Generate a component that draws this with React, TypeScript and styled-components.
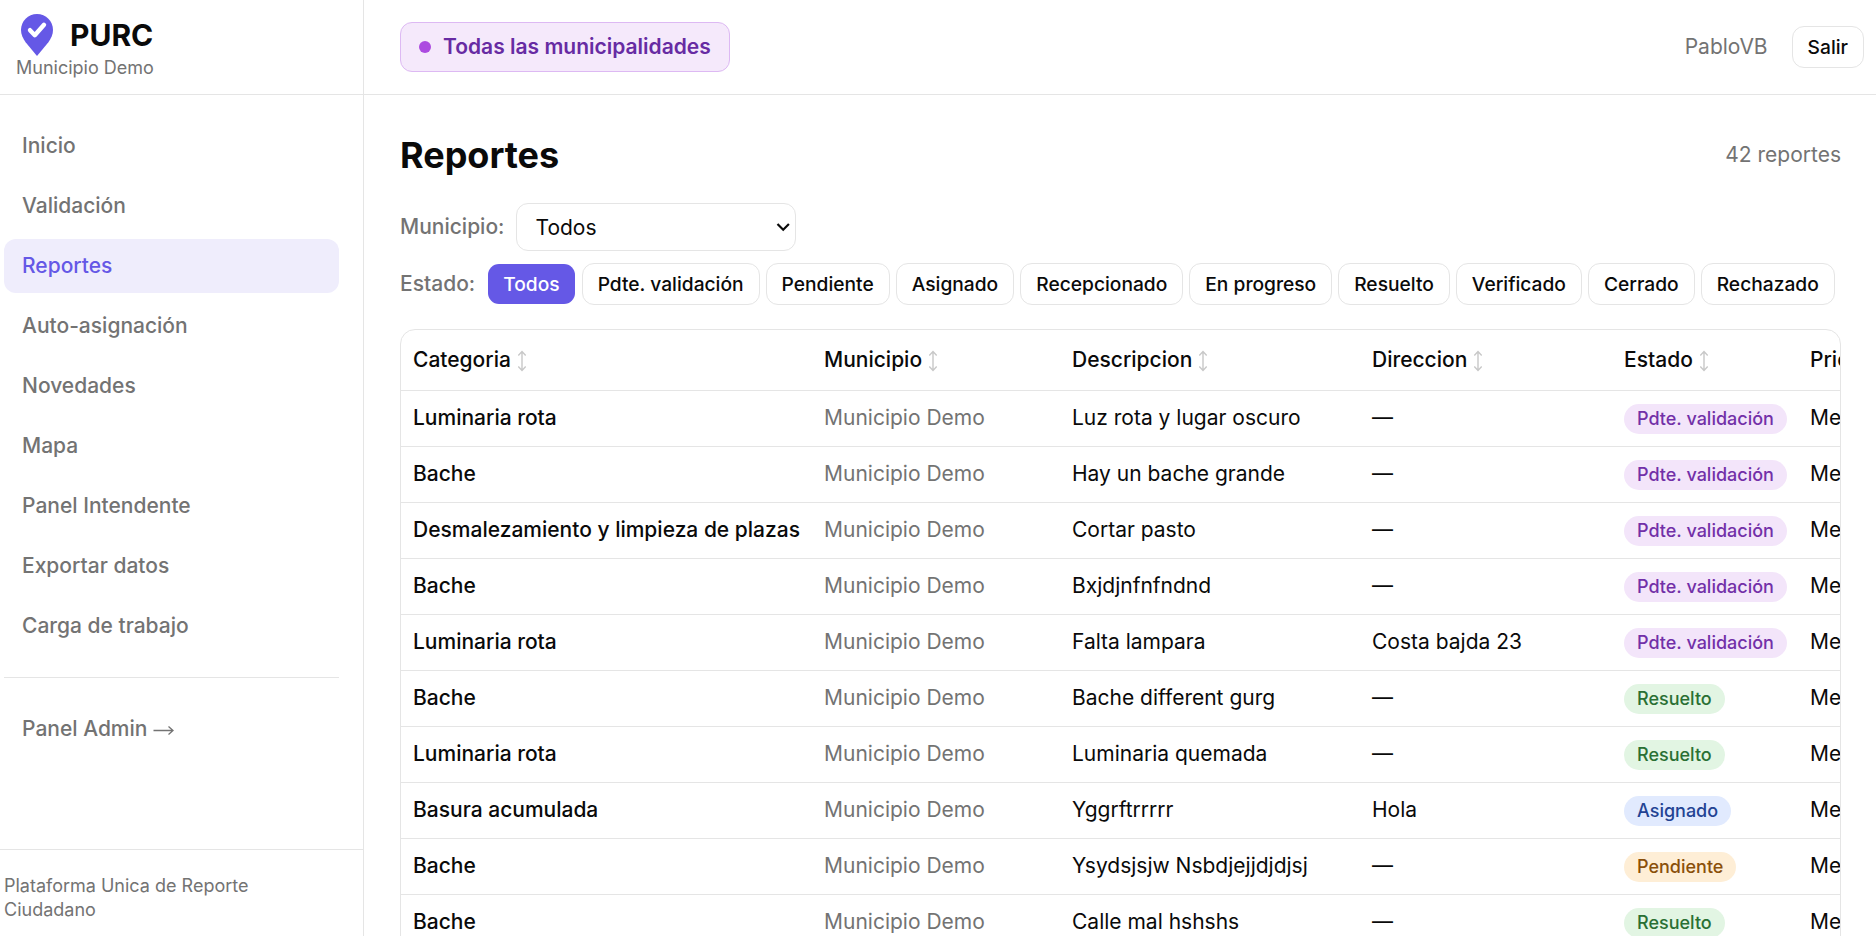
import React from 'react';
import styled, { createGlobalStyle, css } from 'styled-components';

const GlobalStyle = createGlobalStyle`
  *, *::before, *::after { box-sizing: border-box; }
  html, body { margin: 0; padding: 0; background: #fff; overflow: hidden; }
  body {
    font-family: Inter, "Liberation Sans", sans-serif;
    font-size: 21px;
    line-height: 30px;
    color: #0a0a0a;
  }
`;

const line = '#e5e5e5';
const muted = '#737373';
const primary = '#6558e6';

const Shell = styled.div`
  display: flex;
  height: 100vh;
  overflow: hidden;
`;

const Sidebar = styled.aside`
  display: flex;
  flex-direction: column;
  flex: none;
  width: 364px;
  border-right: 1px solid ${line};
`;

const Brand = styled.div`
  height: 95px;
  flex: none;
  padding: 13px 16px 0;
  border-bottom: 1px solid ${line};
`;

const BrandRow = styled.div`
  display: flex;
  align-items: center;
  height: 43px;
  gap: 16px;
  padding-left: 4px;
`;

const BrandName = styled.span`
  font-size: 30px;
  font-weight: 700;
`;

const BrandSub = styled.div`
  font-size: 18px;
  line-height: 24px;
  color: ${muted};
`;

const Nav = styled.nav`
  display: flex;
  flex-direction: column;
  flex: 1;
  gap: 6px;
  padding: 24px 24px 0 4px;
`;

const NavItem = styled.a<{ $active?: boolean }>`
  height: 54px;
  padding: 12px 18px;
  border-radius: 12px;
  font-weight: 500;
  color: ${p => (p.$active ? primary : muted)};
  background: ${p => (p.$active ? '#efedfc' : 'transparent')};
`;

const ArrowIcon = styled.svg`
  vertical-align: -1px;
`;

const Divider = styled.div`
  height: 1px;
  margin: 18px 0;
  background: ${line};
`;

const SideFooter = styled.footer`
  flex: none;
  height: 87px;
  padding: 24px 60px 0 4px;
  border-top: 1px solid ${line};
  font-size: 18px;
  line-height: 24px;
  color: ${muted};
`;

const Content = styled.div`
  display: flex;
  flex-direction: column;
  flex: 1;
  min-width: 0;
`;

const TopBar = styled.header`
  display: flex;
  align-items: center;
  justify-content: space-between;
  flex: none;
  height: 95px;
  padding: 0 12px 0 36px;
  border-bottom: 1px solid ${line};
`;

const Scope = styled.div`
  display: flex;
  align-items: center;
  gap: 12px;
  height: 50px;
  padding: 0 18px;
  border: 1px solid #ddb9f3;
  border-radius: 12px;
  background: #f5e9fb;
  color: #672ba3;
  font-weight: 600;
`;

const Dot = styled.span`
  width: 12px;
  height: 12px;
  border-radius: 50%;
  background: #ac4be0;
`;

const UserArea = styled.div`
  display: flex;
  align-items: center;
  gap: 24px;
  color: ${muted};
`;

const Button = styled.button<{ $active?: boolean }>`
  height: 42px;
  padding: 0 15px;
  border: 1px solid ${line};
  border-radius: 12px;
  background: #fff;
  background-clip: padding-box;
  color: #0a0a0a;
  font-family: inherit;
  font-size: 19.2px;
  font-weight: 500;
  line-height: 28px;
  white-space: nowrap;
  ${p => p.$active && css`
    border-color: transparent;
    background-color: ${primary};
    color: #fff;
  `}
`;

const Main = styled.main`
  display: flex;
  flex-direction: column;
  padding: 36px 35px 0 36px;
`;

const TitleRow = styled.div`
  display: flex;
  align-items: center;
  justify-content: space-between;
  height: 48px;
  color: ${muted};
`;

const Title = styled.h1`
  margin: 0;
  color: #0a0a0a;
  font-size: 36px;
  line-height: 48px;
  font-weight: 700;
`;

const MunicipalityRow = styled.div`
  display: flex;
  align-items: center;
  gap: 12px;
  margin-top: 24px;
  height: 48px;
`;

const StateRow = styled.div`
  display: flex;
  align-items: center;
  gap: 6.03px;
  margin-top: 12px;
  height: 42px;
`;

const Label = styled.span<{ $gap?: number }>`
  margin-right: ${p => p.$gap ?? 0}px;
  color: ${muted};
  font-weight: 500;
`;

const SelectBox = styled.div`
  position: relative;
  width: 280px;
  height: 48px;

  svg {
    position: absolute;
    right: 5px;
    top: 18px;
    pointer-events: none;
  }
`;

const Select = styled.select`
  appearance: none;
  width: 100%;
  height: 48px;
  padding: 0 30px 0 18px;
  border: 1px solid ${line};
  border-radius: 12px;
  background: #fff;
  color: #0a0a0a;
  font-family: inherit;
  font-size: 21px;
`;

const TableFrame = styled.div`
  margin-top: 24px;
  border: 1px solid ${line};
  border-radius: 15px;
  overflow: hidden;
`;

const Table = styled.table`
  width: 1660px;
  table-layout: fixed;
  border-collapse: separate;
  border-spacing: 0;
`;

const HeadCell = styled.th`
  height: 61px;
  padding: 0 12px;
  border-bottom: 1px solid ${line};
  text-align: left;
  font-weight: 500;
  white-space: nowrap;
`;

const SortIcon = styled.svg`
  margin-left: 6px;
  vertical-align: -5px;
`;

const Cell = styled.td<{ $muted?: boolean; $strong?: boolean }>`
  height: 56px;
  padding: 0 12px 2px;
  border-bottom: 1px solid ${line};
  color: ${p => (p.$muted ? muted : '#0a0a0a')};
  font-weight: ${p => (p.$strong ? 500 : 400)};
  white-space: nowrap;
`;

const tones = {
  'Pdte. validación': ['#f3e5fa', '#7230a8'],
  Resuelto: ['#e2f5e3', '#2a7034'],
  Asignado: ['#e1eafe', '#234393'],
  Pendiente: ['#feeed6', '#8a500a'],
} as const;

type State = keyof typeof tones;

const Badge = styled.span<{ $state: State }>`
  display: flex;
  align-items: center;
  width: fit-content;
  height: 30px;
  margin-top: 3px;
  padding: 0 13px;
  border-radius: 15px;
  background: ${p => tones[p.$state][0]};
  color: ${p => tones[p.$state][1]};
  font-size: 18px;
  font-weight: 500;
`;

const Pin = () => (
  <svg width="34" height="43" viewBox="0 0 34 43" fill="none">
    <path d="M17 1C8 1 1 8 1 17c0 4.400 1.900 8.200 4.600 12.200L17 43l11.400-13.800C31.100 25.200 33 21.400 33 17 33 8 26 1 17 1Z" fill={primary} />
    <path d="m10 17.200 4.800 5 9.200-10.400" stroke="#fff" strokeWidth="4.400" strokeLinecap="round" strokeLinejoin="round" />
  </svg>
);

const Chevron = () => (
  <svg width="16" height="12" viewBox="0 0 16 12" fill="none">
    <path d="m2.500 3 5.700 5.700L13.900 3" stroke="#0a0a0a" strokeWidth="2.200" />
  </svg>
);

const RightArrow = () => (
  <ArrowIcon width="22" height="12" viewBox="0 0 22 12" fill="none">
    <path d="M.5 5.500h19.500M15.500 1.500 20 5.500l-4.500 4" stroke={muted} strokeWidth="1.300" />
  </ArrowIcon>
);

const SortArrows = () => (
  <SortIcon width="10" height="22" viewBox="0 0 10 22" fill="none">
    <path d="M5 1.500v19M1.300 5.400 5 1.600l3.700 3.800M1.300 16.600 5 20.400l3.700-3.800" stroke="#c8c8c8" strokeWidth="1.400" />
  </SortIcon>
);

const navItems = ['Inicio', 'Validación', 'Reportes', 'Auto-asignación', 'Novedades', 'Mapa', 'Panel Intendente', 'Exportar datos', 'Carga de trabajo'];
const filters = ['Todos', 'Pdte. validación', 'Pendiente', 'Asignado', 'Recepcionado', 'En progreso', 'Resuelto', 'Verificado', 'Cerrado', 'Rechazado'];
const columns: [string, number][] = [['Categoria', 411], ['Municipio', 248], ['Descripcion', 300], ['Direccion', 252], ['Estado', 186], ['Prioridad', 263]];
const reports: [string, string, string, State][] = [
  ['Luminaria rota', 'Luz rota y lugar oscuro', '—', 'Pdte. validación'],
  ['Bache', 'Hay un bache grande', '—', 'Pdte. validación'],
  ['Desmalezamiento y limpieza de plazas', 'Cortar pasto', '—', 'Pdte. validación'],
  ['Bache', 'Bxjdjnfnfndnd', '—', 'Pdte. validación'],
  ['Luminaria rota', 'Falta lampara', 'Costa bajda 23', 'Pdte. validación'],
  ['Bache', 'Bache different gurg', '—', 'Resuelto'],
  ['Luminaria rota', 'Luminaria quemada', '—', 'Resuelto'],
  ['Basura acumulada', 'Yggrftrrrrr', 'Hola', 'Asignado'],
  ['Bache', 'Ysydsjsjw Nsbdjejjdjdjsj', '—', 'Pendiente'],
  ['Bache', 'Calle mal hshshs', '—', 'Resuelto'],
];

export default function App() {
  return (
    <Shell>
      <GlobalStyle />
      <Sidebar>
        <Brand>
          <BrandRow>
            <Pin />
            <BrandName>PURC</BrandName>
          </BrandRow>
          <BrandSub>Municipio Demo</BrandSub>
        </Brand>
        <Nav>
          {navItems.map(item => (
            <NavItem key={item} $active={item === 'Reportes'}>{item}</NavItem>
          ))}
          <Divider />
          <NavItem>Panel Admin <RightArrow /></NavItem>
        </Nav>
        <SideFooter>Plataforma Unica de Reporte Ciudadano</SideFooter>
      </Sidebar>
      <Content>
        <TopBar>
          <Scope><Dot />Todas las municipalidades</Scope>
          <UserArea>
            <span>PabloVB</span>
            <Button>Salir</Button>
          </UserArea>
        </TopBar>
        <Main>
          <TitleRow>
            <Title>Reportes</Title>
            <span>42 reportes</span>
          </TitleRow>
          <MunicipalityRow>
            <Label>Municipio:</Label>
            <SelectBox>
              <Select defaultValue="Todos"><option>Todos</option></Select>
              <Chevron />
            </SelectBox>
          </MunicipalityRow>
          <StateRow>
            <Label $gap={6}>Estado:</Label>
            {filters.map((f, i) => <Button key={f} $active={i === 0}>{f}</Button>)}
          </StateRow>
          <TableFrame>
            <Table>
              <colgroup>{columns.map(([name, w]) => <col key={name} width={w} />)}</colgroup>
              <thead>
                <tr>{columns.map(([name]) => <HeadCell key={name}>{name}<SortArrows /></HeadCell>)}</tr>
              </thead>
              <tbody>
                {reports.map(([category, description, address, state], i) => (
                  <tr key={i}>
                    <Cell $strong>{category}</Cell>
                    <Cell $muted>Municipio Demo</Cell>
                    <Cell>{description}</Cell>
                    <Cell>{address}</Cell>
                    <Cell><Badge $state={state}>{state}</Badge></Cell>
                    <Cell>Media</Cell>
                  </tr>
                ))}
              </tbody>
            </Table>
          </TableFrame>
        </Main>
      </Content>
    </Shell>
  );
}
